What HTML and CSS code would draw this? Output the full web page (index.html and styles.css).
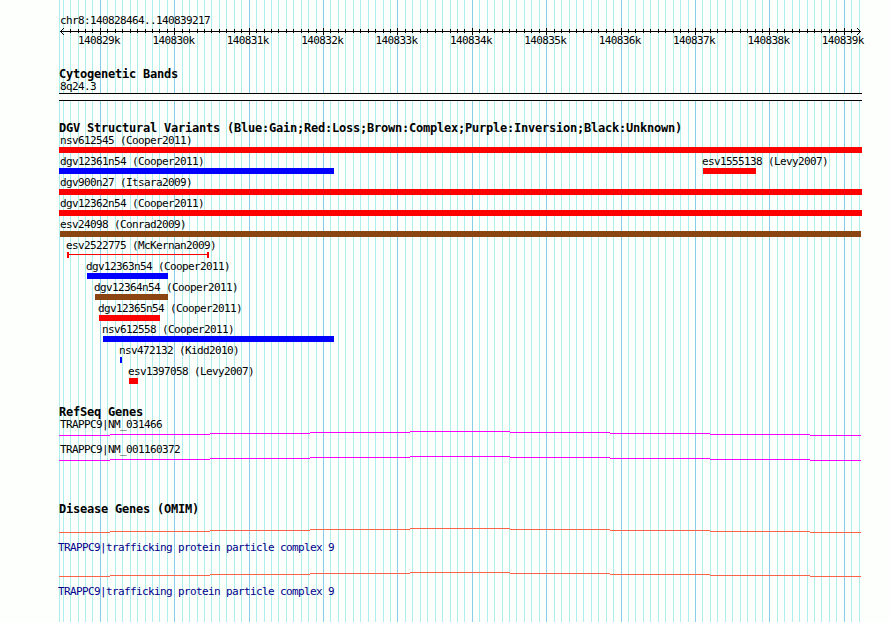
FILE: index.html
```html
<!DOCTYPE html>
<html lang="en">
<head>
<meta charset="utf-8">
<title>chr8:140828464..140839217</title>
<link rel="stylesheet" href="styles.css">
</head>
<body>
<svg class="grid" width="890" height="622" shape-rendering="crispEdges" aria-hidden="true">
  <path id="grid-minor" class="grid-minor"/>
  <path id="grid-major" class="grid-major"/>
</svg>
<main class="browser">
  <header class="ruler">
    <div class="label region">chr8:140828464..140839217</div>
    <svg class="axis" width="803" height="8" shape-rendering="crispEdges" aria-hidden="true">
      <path d="M1 3.5H802M1.5 3v1M2.5 2v3M3.5 1v1M3.5 5v1M4.5 0v1M4.5 6v1M801.5 3v1M800.5 2v3M799.5 1v1M799.5 5v1M798.5 0v1M798.5 6v1"/>
      <path id="ticks"/>
    </svg>
    <div class="label scale" id="scale"></div>
  </header>

  <section class="track cytobands">
    <h2>Cytogenetic Bands</h2>
    <div class="label">8q24.3</div>
    <div class="band"></div>
  </section>

  <section class="track variants">
    <h2>DGV Structural Variants (Blue:Gain;Red:Loss;Brown:Complex;Purple:Inversion;Black:Unknown)</h2>
    <div class="row"><div class="feature full"><span class="label">nsv612545 (Cooper2011)</span><i class="bar loss"></i></div></div>
    <div class="row">
      <div class="feature v12361"><span class="label">dgv12361n54 (Cooper2011)</span><i class="bar gain"></i></div>
      <div class="feature offset v1555138"><span class="label">esv1555138 (Levy2007)</span><i class="bar loss"></i></div>
    </div>
    <div class="row"><div class="feature full"><span class="label">dgv900n27 (Itsara2009)</span><i class="bar loss"></i></div></div>
    <div class="row"><div class="feature full"><span class="label">dgv12362n54 (Cooper2011)</span><i class="bar loss"></i></div></div>
    <div class="row"><div class="feature v24098"><span class="label">esv24098 (Conrad2009)</span><i class="bar complex"></i></div></div>
    <div class="row"><div class="feature offset v2522775"><span class="label">esv2522775 (McKernan2009)</span><i class="span"></i></div></div>
    <div class="row"><div class="feature offset v12363"><span class="label">dgv12363n54 (Cooper2011)</span><i class="bar gain"></i></div></div>
    <div class="row"><div class="feature offset v12364"><span class="label">dgv12364n54 (Cooper2011)</span><i class="bar complex"></i></div></div>
    <div class="row"><div class="feature offset v12365"><span class="label">dgv12365n54 (Cooper2011)</span><i class="bar loss"></i></div></div>
    <div class="row"><div class="feature offset v612558"><span class="label">nsv612558 (Cooper2011)</span><i class="bar gain"></i></div></div>
    <div class="row"><div class="feature offset v472132"><span class="label">nsv472132 (Kidd2010)</span><i class="bar gain"></i></div></div>
    <div class="row"><div class="feature offset v1397058"><span class="label">esv1397058 (Levy2007)</span><i class="bar loss"></i></div></div>
  </section>

  <section class="track refseq">
    <h2>RefSeq Genes</h2>
    <div class="gene">
      <div class="label">TRAPPC9|NM_031466</div>
      <svg class="intron" width="802" height="5" shape-rendering="crispEdges"><path d="M0 4.5H51M51 3.5H151M151 2.5H251M251 1.5H351M351 .5H451M451 1.5H551M551 2.5H651M651 3.5H751M751 4.5H802"/></svg>
    </div>
    <div class="gene">
      <div class="label">TRAPPC9|NM_001160372</div>
      <svg class="intron" width="802" height="5" shape-rendering="crispEdges"><path d="M0 4.5H51M51 3.5H151M151 2.5H251M251 1.5H351M351 .5H451M451 1.5H551M551 2.5H651M651 3.5H751M751 4.5H802"/></svg>
    </div>
  </section>

  <section class="track omim">
    <h2>Disease Genes (OMIM)</h2>
    <div class="gene">
      <svg class="intron" width="802" height="5" shape-rendering="crispEdges"><path d="M0 4.5H51M51 3.5H151M151 2.5H251M251 1.5H351M351 .5H451M451 1.5H551M551 2.5H651M651 3.5H751M751 4.5H802"/></svg>
      <div class="label">TRAPPC9|trafficking protein particle complex 9</div>
    </div>
    <div class="gene">
      <svg class="intron" width="802" height="5" shape-rendering="crispEdges"><path d="M0 4.5H51M51 3.5H151M151 2.5H251M251 1.5H351M351 .5H451M451 1.5H551M551 2.5H651M651 3.5H751M751 4.5H802"/></svg>
      <div class="label">TRAPPC9|trafficking protein particle complex 9</div>
    </div>
  </section>
</main>
<script src="scale.js"></script>
</body>
</html>
```
FILE: styles.css
```css
* { box-sizing: border-box; }
body {
  margin: 0;
  width: 890px;
  height: 622px;
  overflow: hidden;
  background: #fdfffc;
  color: #000;
}
.grid { position: absolute; inset: 0; z-index: -1; }
.grid path { fill: none; stroke-width: 1; }
.grid .grid-minor { stroke: #afeeee; }
.grid .grid-major { stroke: #87ceeb; }

.browser { margin-left: 59px; width: 803px; padding-top: 15px; }
svg { display: block; }

.label {
  display: block;
  height: 12px;
  padding-left: 1px;
  font: 11px/12px "DejaVu Sans Mono", monospace;
  letter-spacing: -0.622px;
  white-space: pre;
}
h2 {
  margin: 0;
  height: 13px;
  font: bold 12px/13px "DejaVu Sans Mono", monospace;
  letter-spacing: -0.225px;
  white-space: pre;
}

.ruler { height: 53px; }
.region { margin-bottom: 1px; }
.axis path { fill: none; stroke: #000; }
.scale { display: flex; padding-left: 19px; margin-top: -1px; }
.scale span { flex: none; width: 74.39px; }

.cytobands { height: 54px; }
.band {
  height: 8px;
  border: solid #000;
  border-width: 1px 0;
  background: #fdfffc;
}

.variants { height: 284px; }
.row { display: flex; height: 21px; }
.feature { flex: none; }
.bar { display: block; height: 6px; }
.loss { background: #f00; }
.gain { background: #00f; }
.complex { background: #8b4513; }
.full { width: 803px; }
.v12361 { width: 275px; }
.v1555138 { width: 53px; margin-left: 369px; }
.v24098 { width: 801px; margin-left: 1px; }
.v24098 .label { padding-left: 0; }
.v2522775 { width: 142px; margin-left: 8px; }
.v12363 { width: 81px; margin-left: 28px; }
.v12364 { width: 73px; margin-left: 36px; }
.v12365 { width: 61px; margin-left: 40px; }
.v612558 { width: 231px; margin-left: 44px; }
.v472132 { width: 2px; margin-left: 61px; }
.v1397058 { width: 9px; margin-left: 70px; }
.offset .label { padding-left: 0; margin-left: -1px; }
.span {
  display: block;
  height: 6px;
  border: solid #f00;
  border-width: 0 2px;
  background: linear-gradient(#f00, #f00) 0 2px / 100% 1px no-repeat;
}

.refseq { height: 97px; }
.refseq .gene { height: 25px; }
.refseq .intron { stroke: #f0f; }

.omim h2 { margin-bottom: 12px; }
.omim .gene { height: 44px; }
.omim .intron { stroke: #ff6347; margin-bottom: 9px; }
.omim .label { color: #00008b; padding-left: 0; margin-left: -1px; }
```
FILE: scale.js
```js
// Horizontal scale: 800px spans the displayed region, starting at x = 60.
const START = 140828464, END = 140839217, LEFT = 60, PANEL = 59;
const pxPerBase = 800 / (END - START + 1);
let minor = "M59.5 0V622", major = "", ticks = "";
for (let pos = 140828500; pos <= END; pos += 100) {
  const x = Math.round(LEFT + (pos - START) * pxPerBase) + 0.5;
  if (pos % 1000 === 0) {
    major += `M${x} 0V622`;
    ticks += `M${x - PANEL} 0V7`;
    const label = document.createElement("span");
    label.textContent = pos / 1000 + "k";
    document.getElementById("scale").append(label);
  } else {
    minor += `M${x} 0V622`;
    // The arrowheads take the place of the outermost ticks.
    if (x > 65 && x < 856) ticks += `M${x - PANEL} 1V5`;
  }
}
document.getElementById("grid-minor").setAttribute("d", minor);
document.getElementById("grid-major").setAttribute("d", major);
document.getElementById("ticks").setAttribute("d", ticks);
```
